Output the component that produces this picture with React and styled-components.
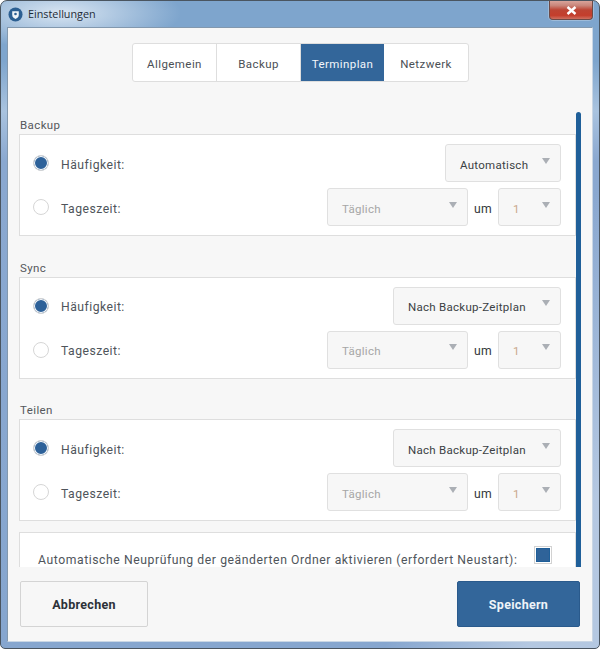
import React from "react";
import styled, { createGlobalStyle } from "styled-components";

const Global = createGlobalStyle`
  html, body { margin: 0; padding: 0; background: #fff; }
  #root { width: 600px; height: 649px; }
  * { box-sizing: border-box; }
`;

const Frame = styled.div`
  width: 600px; height: 649px;
  display: flex; flex-direction: column;
  border: 1px solid #4a5560;
  border-radius: 7px 7px 5px 5px;
  padding: 0 6px 6px 6px;
  background:
    radial-gradient(ellipse 120px 36px at 60px 12px, rgba(226,236,246,.9), rgba(226,236,246,0) 100%),
    linear-gradient(115deg, rgba(255,255,255,0) 76%, rgba(255,255,255,.38) 92%),
    linear-gradient(180deg, #7ea5cd 0, #7ea5cd 60px, #a9c3df 110px, #8aa8d0 160px, #86a6cf 100%);
  font-family: Roboto, "Liberation Sans", sans-serif;
  overflow: hidden;
`;

const TitleBar = styled.div`
  height: 26px; flex: none;
  display: flex; align-items: flex-start;
`;

const AppIcon = styled.svg`
  width: 15px; height: 15px; margin: 6px 5px 0 1px; flex: none;
`;

const Title = styled.span`
  font: 10.8px "Open Sans", "Liberation Sans", sans-serif;
  color: #1d2a36; margin-top: 5px; line-height: 15px;
`;

const CloseButton = styled.div`
  margin-left: auto;
  width: 44px; height: 19px;
  border: 1px solid #6d4a46; border-top: 0;
  border-radius: 0 0 4px 4px;
  background: linear-gradient(180deg, #d9a49a 0, #c9867a 25%, #bd4433 50%, #c43e2c 80%, #cf7060 100%);
  display: flex; align-items: center; justify-content: center;
  box-shadow: 0 0 0 1px rgba(255,255,255,.25);
`;

const Client = styled.div`
  flex: 1; min-height: 0;
  display: flex; flex-direction: column;
  background: #f7f7f7;
  border: 1px solid #5f7d9d;
  border-color: #8298ae #c9d6e4 #c9d6e4 #8298ae;
`;

const Header = styled.div`
  height: 84px; flex: none; padding-top: 15px;
  display: flex; justify-content: center;
`;

const Tabs = styled.div`
  display: flex; height: 39px;
  border: 1px solid #dedede; border-radius: 3px;
  background: #fff; margin-left: 1px;
`;

const Tab = styled.div`
  width: ${p => (p.$active ? 83 : 84)}px; padding-top: 3px;
  display: flex; align-items: center; justify-content: center;
  font-size: 11.5px; letter-spacing: .42px;
  color: ${p => (p.$active ? "#f2f6fa" : "#4b4f55")};
  background: ${p => (p.$active ? "#33669a" : "transparent")};
  border-right: ${p => (p.$last || p.$active ? "0" : "1px solid #dedede")};
`;

const Scroller = styled.div`
  flex: 1; min-height: 0;
  display: flex;
  overflow: hidden;
`;

const Content = styled.div`
  width: 568px; flex: none;
  padding-left: 11px;
  display: flex; flex-direction: column;
`;

const Track = styled.div`
  flex: none; width: 6px;
`;

const Thumb = styled.div`
  width: 5px; height: 500px;
  background: #1f5f99; border-radius: 3px 3px 0 0;
`;

const Section = styled.section`
  margin-bottom: ${p => (p.$last ? 11 : 18.5)}px;
`;

const SectionLabel = styled.div`
  font-size: 11.5px; letter-spacing: .4px; color: #55585c;
  height: 22px; padding: 5px 0 0 1px; line-height: 16px;
`;

const Card = styled.div`
  background: #fff; border: 1px solid #dedede;
  height: 102px; padding: 9px 14px 0 13px;
  display: flex; flex-direction: column; gap: 6px;
`;

const Row = styled.div`
  height: 38px; display: flex; align-items: center; gap: 6px;
`;

const Radio = styled.span`
  width: 16px; height: 16px; border-radius: 50%; flex: none;
  margin-right: 6px;
  border: 1px solid #d6d6d6;
  background: ${p => (p.$on ? "#2d6199" : "#fff")};
  box-shadow: ${p => (p.$on ? "inset 0 0 0 1px #fff" : "none")};
`;

const RowLabel = styled.span`
  font-size: 12.2px; letter-spacing: .48px; color: #4f555b;
  margin-right: auto; padding-top: 3px;
`;

const Select = styled.div`
  width: ${p => p.$w}px; height: 38px; flex: none;
  background: #f7f7f7; border: 1px solid #e0e0e0; border-radius: 3px;
  display: flex; align-items: center; justify-content: space-between;
  padding: 3px 10px 0 14px;
  font-size: 11.5px; letter-spacing: .28px;
  color: ${p => (p.$disabled ? "#a6a6a6" : "#3b3f44")};
`;

const SelectText = styled.span`
  color: ${p => (p.$accent ? "#c9a88c" : "inherit")};
`;

const Caret = styled.span`
  width: 0; height: 0; margin-top: -8px;
  border-left: 4.5px solid transparent; border-right: 4.5px solid transparent;
  border-top: 6px solid #abafb5;
`;

const Um = styled.span`
  font-size: 12.2px; letter-spacing: .2px; color: #33373b; width: 18px; padding-top: 3px;
`;

const AutoCard = styled.div`
  background: #fff; border: 1px solid #dedede; border-bottom: 0;
  height: 60px; flex: none;
  padding: 15px 26px 0 18px;
  display: flex; align-items: flex-start; justify-content: space-between;
`;

const AutoLabel = styled.span`
  font-size: 12.2px; letter-spacing: .57px; color: #4f555b; line-height: 24px;
`;

const Check = styled.span`
  width: 12px; height: 12px; flex: none; margin-top: 1px;
  background: #2f6399; box-shadow: 0 0 0 1px #1f5f99, 0 0 0 2px #fff, 0 0 0 3px #d2d2d2;
`;

const Footer = styled.div`
  height: 74px; flex: none; padding: 14px 12px 0 12px;
  display: flex; justify-content: space-between; align-items: flex-start;
`;

const Button = styled.div`
  height: 46px; width: ${p => p.$w}px; padding-top: 1px;
  border-radius: 2px;
  display: flex; align-items: center; justify-content: center;
  font-size: 12.5px; font-weight: 700; letter-spacing: .3px;
  border: 1px solid ${p => (p.$primary ? "#2a5a8c" : "#d4d4d4")};
  background: ${p => (p.$primary ? "#33669a" : "#f7f7f7")};
  color: ${p => (p.$primary ? "#eef3f8" : "#2c3138")};
`;

const Field = ({ w, disabled, accent, children }) => (
  <Select $w={w} $disabled={disabled}>
    <SelectText $accent={accent}>{children}</SelectText>
    <Caret />
  </Select>
);

const Schedule = ({ title, value, width, last }) => (
  <Section $last={last}>
    <SectionLabel>{title}</SectionLabel>
    <Card>
      <Row>
        <Radio $on />
        <RowLabel>Häufigkeit:</RowLabel>
        <Field w={width}>{value}</Field>
      </Row>
      <Row>
        <Radio />
        <RowLabel>Tageszeit:</RowLabel>
        <Field w={141} disabled>Täglich</Field>
        <Um>um</Um>
        <Field w={63} disabled accent>1</Field>
      </Row>
    </Card>
  </Section>
);

export default function App() {
  return (
    <>
      <Global />
      <Frame>
        <TitleBar>
          <AppIcon viewBox="0 0 16 16">
            <circle cx="8" cy="8" r="7.5" fill="#2c5f92" />
            <path d="M4.5 4.5h7v4c0 2.2-1.8 3.5-3.5 4.2C6.3 12 4.5 10.7 4.5 8.5z" fill="#eef3f8" />
            <circle cx="8" cy="7.5" r="1.4" fill="#2c5f92" />
          </AppIcon>
          <Title>Einstellungen</Title>
          <CloseButton>
            <svg width="11" height="9" viewBox="0 0 11 9">
              <path d="M1.5 1l8 7M9.5 1l-8 7" stroke="#fff" strokeWidth="2.4" />
            </svg>
          </CloseButton>
        </TitleBar>
        <Client>
          <Header>
            <Tabs>
              <Tab>Allgemein</Tab>
              <Tab>Backup</Tab>
              <Tab $active>Terminplan</Tab>
              <Tab $last>Netzwerk</Tab>
            </Tabs>
          </Header>
          <Scroller>
            <Content>
              <Schedule title="Backup" value="Automatisch" width={116} />
              <Schedule title="Sync" value="Nach Backup-Zeitplan" width={168} />
              <Schedule title="Teilen" value="Nach Backup-Zeitplan" width={168} last />
              <AutoCard>
                <AutoLabel>Automatische Neuprüfung der geänderten Ordner aktivieren (erfordert Neustart):</AutoLabel>
                <Check />
              </AutoCard>
            </Content>
            <Track><Thumb /></Track>
          </Scroller>
          <Footer>
            <Button $w={128}>Abbrechen</Button>
            <Button $w={123} $primary>Speichern</Button>
          </Footer>
        </Client>
      </Frame>
    </>
  );
}
